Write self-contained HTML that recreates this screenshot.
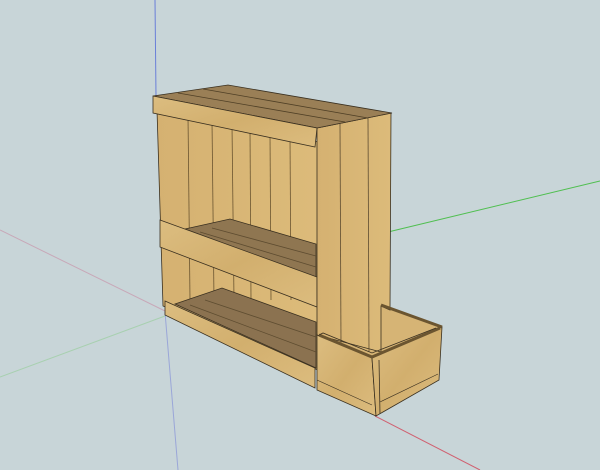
<!DOCTYPE html>
<html><head><style>
html,body{margin:0;padding:0;width:600px;height:470px;overflow:hidden;background:#c8d5d8}
svg{display:block}
</style></head><body>
<svg width="600" height="470" viewBox="0 0 600 470" xmlns="http://www.w3.org/2000/svg">
<defs>
<linearGradient id="w1" x1="0" y1="0" x2="1" y2="1">
<stop offset="0" stop-color="#dcbd80"/><stop offset="0.5" stop-color="#d2af6e"/><stop offset="1" stop-color="#dcbc7e"/>
</linearGradient>
<linearGradient id="w2" x1="0" y1="0" x2="1" y2="0">
<stop offset="0" stop-color="#d5b171"/><stop offset="1" stop-color="#dcbb7a"/>
</linearGradient>
</defs>
<line x1="155" y1="0" x2="156" y2="96" stroke="#6a7fd8" stroke-width="1"/>
<line x1="165" y1="312" x2="178" y2="470" stroke="#9aa6d8" stroke-width="1"/>
<line x1="0" y1="230" x2="165" y2="311" stroke="#c8a8b8" stroke-width="1"/>
<line x1="0" y1="377" x2="165" y2="316" stroke="#a8d0b0" stroke-width="1"/>
<line x1="388" y1="232" x2="600" y2="181" stroke="#4fbf4f" stroke-width="1"/>
<line x1="375" y1="416" x2="480" y2="470" stroke="#d06070" stroke-width="1"/>

<polygon points="157,110 318,142 318,370 163,306" fill="url(#w2)" stroke="#3a3020" stroke-width="0.8"/>
<g stroke="#6b5530" stroke-width="0.8">
<line x1="188" y1="116" x2="190" y2="300"/><line x1="212" y1="121" x2="214" y2="300"/>
<line x1="232" y1="125" x2="234" y2="300"/><line x1="250" y1="129" x2="251" y2="300"/>
<line x1="270" y1="133" x2="271" y2="300"/><line x1="290" y1="137" x2="291" y2="300"/>
</g>
<polygon points="185,229 230,219 316,244 316,278" fill="#8f7651" stroke="#3a3020" stroke-width="0.8"/>
<line x1="212" y1="228" x2="316" y2="256" stroke="#5e4c30" stroke-width="0.8"/>
<line x1="200" y1="232" x2="316" y2="267" stroke="#5e4c30" stroke-width="0.8"/>
<polygon points="160,220 317,277 317,307 160,247" fill="url(#w1)" stroke="#3a3020" stroke-width="0.8"/>
<polygon points="175,304 222,288 316,322 316,368" fill="#8b7250" stroke="#3a3020" stroke-width="0.8"/>
<line x1="205" y1="300" x2="316" y2="337" stroke="#5e4c30" stroke-width="0.8"/>
<line x1="190" y1="305" x2="316" y2="352" stroke="#5e4c30" stroke-width="0.8"/>
<polygon points="165,301 315,368 315,388 165,315" fill="url(#w1)" stroke="#3a3020" stroke-width="0.8"/>
<polygon points="317,335 381,305 442,327 372,358" fill="#d6b475"/>
<polygon points="317,128 391,113 390,310 381,306 381,352 317,335" fill="url(#w2)" stroke="#3a3020" stroke-width="0.8"/>
<g stroke="#5e4c30" stroke-width="0.8">
<line x1="340" y1="124" x2="341" y2="344"/><line x1="368" y1="118" x2="369" y2="352"/>
</g>
<polygon points="153,96 228,85 392,113 317,128" fill="#9a7f56" stroke="#3a3020" stroke-width="0.8"/>
<g stroke="#4f3f25" stroke-width="0.8">
<line x1="178" y1="93" x2="345" y2="122"/><line x1="203" y1="89" x2="368" y2="118"/>
</g>
<polygon points="153,96 317,128 315,147 153,113" fill="url(#w1)" stroke="#3a3020" stroke-width="0.8"/>
<polygon points="317,335 372,358 376,416 317,390" fill="url(#w1)" stroke="#3a3020" stroke-width="0.8"/>
<polygon points="372,358 442,327 439,380 376,416" fill="url(#w1)" stroke="#3a3020" stroke-width="0.8"/>
<polyline points="381,305 442,327" fill="none" stroke="#6b5530" stroke-width="3"/>
<polyline points="319,335 372,357 440,328" fill="none" stroke="#6b5530" stroke-width="3"/>
<polyline points="319,335 323,333 372,353 436,328" fill="none" stroke="#3a3020" stroke-width="0.8"/>
<line x1="379" y1="360" x2="380" y2="414" stroke="#3a3020" stroke-width="0.8"/>
<line x1="380" y1="402" x2="438" y2="374" stroke="#3a3020" stroke-width="0.6"/>
<line x1="317" y1="380" x2="372" y2="405" stroke="#3a3020" stroke-width="0.6"/>
</svg>
</body></html>
